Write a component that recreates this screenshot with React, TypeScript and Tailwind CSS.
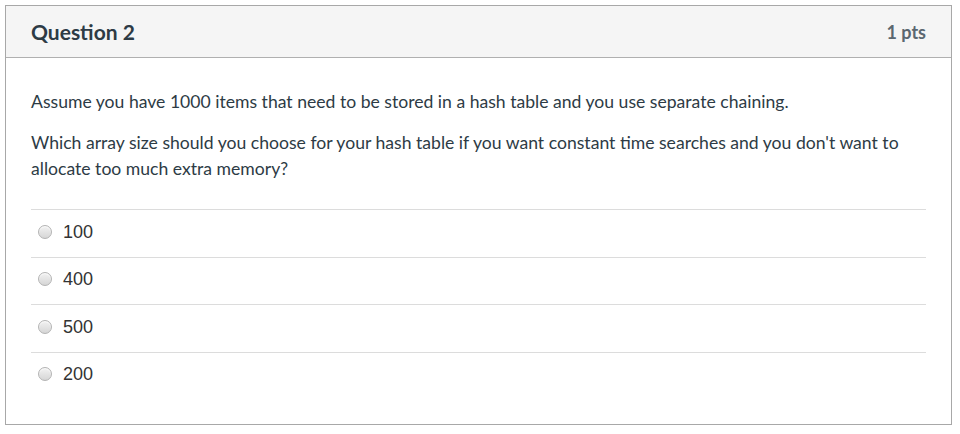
const options = ['100', '400', '500', '200']

function Radio() {
  return (
    <span className="inline-block w-[14px] h-[14px] rounded-full border border-[#b3b3b3] bg-gradient-to-b from-[#f2f2f2] to-[#d6d6d6] shadow-[inset_0_1px_1px_rgba(255,255,255,0.8)]" />
  )
}

export default function App() {
  return (
    <div className="w-[960px] h-[434px] bg-white pt-[5px] pl-[5px]">
      <div className="w-[947px] h-[420px] border border-[#a8a8a8] flex flex-col font-['Lato','Liberation_Sans',sans-serif]">
        <div className="h-[52px] bg-[#f5f5f5] border-b border-[#b0b0b0] flex items-center justify-between px-[25px]">
          <h2 className="text-[21px] font-bold text-[#2d3b45] leading-none">Question 2</h2>
          <span className="text-[18px] font-bold text-[#5b6770] leading-none">1 pts</span>
        </div>

        <div className="px-[25px] pt-[31px] text-[17.6px] leading-[26px] text-[#2d3b45]">
          <p>Assume you have 1000 items that need to be stored in a hash table and you use separate chaining.</p>
          <p className="mt-[15px]">
            Which array size should you choose for your hash table if you want constant time searches and you don't want to allocate too much extra memory?
          </p>

          <div className="mt-[27px]">
            {options.map((o) => (
              <div
                key={o}
                className="h-[47.5px] pb-[3px] border-t border-[#dcdcdc] flex items-center gap-[11px] pl-[7px] font-['Liberation_Sans',Arial,sans-serif] text-[18px] text-[#333]"
              >
                <Radio />
                <span>{o}</span>
              </div>
            ))}
          </div>
        </div>
      </div>
    </div>
  )
}
